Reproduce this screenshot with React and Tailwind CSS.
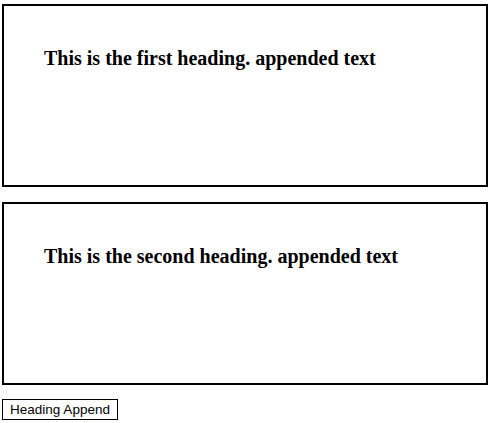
import React from 'react';

function Box({ text }) {
  return (
    <div className="h-[183px] border-2 border-black pl-[40px] pt-[40px]">
      <h2 className="font-['Liberation_Serif',serif] text-[20px] font-bold leading-[24px] text-black">
        {text}
      </h2>
    </div>
  );
}

export default function App() {
  return (
    <div className="flex w-[492px] flex-col bg-white pl-[2px] pr-[4px] pt-[4px]">
      <Box text="This is the first heading. appended text" />
      <div className="h-[15px]" />
      <Box text="This is the second heading. appended text" />
      <div className="pt-[11px]">
        <button className="h-[21px] w-[116px] border border-black bg-white font-['Liberation_Sans',sans-serif] text-[13.5px] leading-[19px] text-black">
          Heading Append
        </button>
      </div>
    </div>
  );
}
